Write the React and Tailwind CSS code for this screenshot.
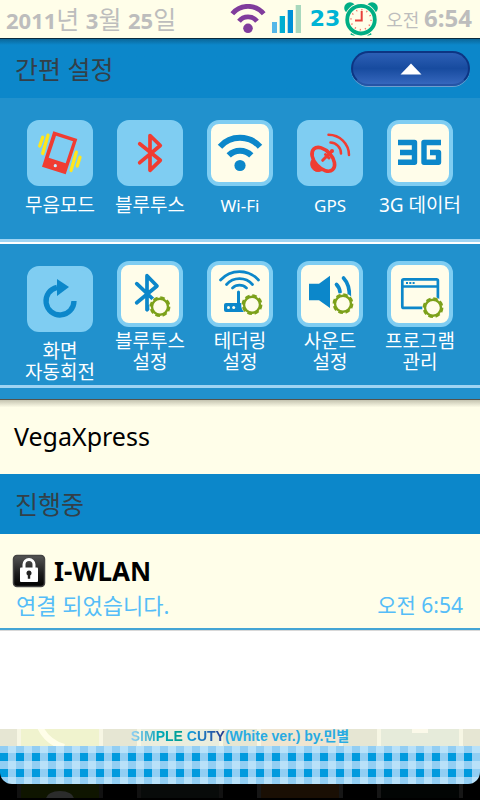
import React, { useState } from "react";
import clsx from "clsx";

const RED = "#f03c32";
const BLUE = "#0c87ca";

const Svg = ({ children, ...props }) => (
  <svg viewBox="0 0 66 66" width="66" height="66" fill="none" aria-hidden="true" {...props}>
    {children}
  </svg>
);

const Gear = ({ x, y }) => (
  <g transform={`translate(${x} ${y})`}>
    <circle r="10.8" fill="#fffdea" />
    <circle r="9.3" stroke="#7ca11b" strokeWidth="2.2" strokeDasharray="4.6 2.704" />
    <circle r="8" stroke="#7ca11b" strokeWidth="2.4" fill="#fffdea" />
  </g>
);

const VibrateIcon = () => (
  <Svg>
    <path
      d="M26.3 11.3 50.3 19 38.7 54.3 15 46.7ZM29 15.7 21.7 37.7 38.7 43.3 46 21.3Z"
      fill={RED}
      fillRule="evenodd"
    />
    <circle cx="28.3" cy="45.7" r="1.6" fill="#c9ecff" />
    <path
      d="M15.7 17.2 12.7 26M21 15.2 15.7 33.5M49.3 32.2 44 50.5M53 37.2 50.2 46"
      stroke="#ffe61c"
      strokeWidth="3.3"
      strokeLinecap="round"
    />
  </Svg>
);

const BluetoothIcon = () => (
  <Svg stroke={RED} strokeWidth="3.7" strokeLinecap="round" strokeLinejoin="round">
    <path d="M22.7 23.8 43.3 40.3 33 50.3V15.5L43.3 25.5 22.7 42.7" />
  </Svg>
);

const WifiIcon = () => (
  <Svg stroke={BLUE} strokeWidth="6">
    <path d="M13 26.7A27 27 0 0 1 53 26.7M21.7 35.4A16 16 0 0 1 44.3 35.4" />
    <circle cx="33" cy="45.5" r="5.6" fill={BLUE} stroke="none" />
  </Svg>
);

const GpsIcon = () => (
  <Svg stroke={RED} strokeLinecap="round">
    <path d="M15.5 39A6 6 0 1 0 27 49Z" fill={RED} strokeWidth="1" />
    <ellipse cx="26.3" cy="39.3" rx="14" ry="8.6" transform="rotate(48 26.3 39.3)" strokeWidth="3.6" fill="#7fcdf2" />
    <path d="M25.7 40.3 34.5 31.5M28.5 34.5 32 38" strokeWidth="3" />
    <circle cx="35" cy="31" r="2" fill={RED} stroke="none" />
    <path d="M33.5 22.5A11 11 0 0 1 44 33.5M31.5 14.8A20.5 20.5 0 0 1 52 35" strokeWidth="2.5" />
  </Svg>
);

const ThreeGIcon = () => (
  <Svg stroke={BLUE} strokeWidth="5.4" strokeLinejoin="round">
    <path d="M11 22.5H27.5V42.3H11M13 32.5H27.5M54 22.5H37V42.3H51.5V32.5H43" />
  </Svg>
);

const RotateIcon = () => (
  <Svg>
    <path d="M47 35A14 14 0 1 1 30 21.3" stroke={BLUE} strokeWidth="5.3" />
    <path d="M30 13 42 21 30 30Z" fill={BLUE} />
  </Svg>
);

const BluetoothSettingsIcon = () => (
  <Svg>
    <path
      d="M19.7 22.7 38 40 30 48.7V14.7L40 25 19.7 41.7"
      stroke={BLUE}
      strokeWidth="3.7"
      strokeLinecap="round"
      strokeLinejoin="round"
    />
    <Gear x={43} y={45.7} />
  </Svg>
);

const TetheringIcon = () => (
  <Svg>
    <path
      d="M13.5 19A25.6 25.6 0 0 1 51.5 19M19.5 23.5A17.5 17.5 0 0 1 45.5 23.5M25.5 27A10 10 0 0 1 39.5 27"
      stroke={BLUE}
      strokeWidth="2.7"
      strokeLinecap="round"
    />
    <path d="M31.5 31V43" stroke={BLUE} strokeWidth="3" strokeLinecap="round" />
    <rect x="17" y="42" width="21" height="9" rx="2" fill={BLUE} />
    <circle cx="21.5" cy="46.5" r="1.5" fill="#fffdea" />
    <circle cx="26.7" cy="46.5" r="1.5" fill="#fffdea" />
    <Gear x={45} y={43.7} />
  </Svg>
);

const SoundIcon = () => (
  <Svg>
    <path d="M12 22.7H22L33 14.7V47L22 39.3H12Z" fill={BLUE} />
    <path d="M39.5 23.5Q42.3 26 43 31M46.5 17Q53 24 52.3 36" stroke={BLUE} strokeWidth="3.7" strokeLinecap="round" />
    <Gear x={46} y={42.7} />
  </Svg>
);

const ProgramIcon = () => (
  <Svg>
    <rect x="15.3" y="18.3" width="35.6" height="28.6" rx="1.5" stroke={BLUE} strokeWidth="2.7" />
    <path d="M15 25.5H51" stroke={BLUE} strokeWidth="2.5" />
    <path d="M19 22H28" stroke={BLUE} strokeWidth="2" strokeDasharray="2 1.3" />
    <Gear x={46} y={46.7} />
  </Svg>
);

const quickToggles = [
  { lines: ["무음모드"], icon: <VibrateIcon />, on: false },
  { lines: ["블루투스"], icon: <BluetoothIcon />, on: false },
  { lines: ["Wi-Fi"], icon: <WifiIcon />, on: true, latin: true },
  { lines: ["GPS"], icon: <GpsIcon />, on: false, latin: true },
  { lines: ["3G 데이터"], icon: <ThreeGIcon />, on: true },
];

const quickSettings = [
  { lines: ["화면", "자동회전"], icon: <RotateIcon />, on: false, low: true },
  { lines: ["블루투스", "설정"], icon: <BluetoothSettingsIcon />, on: true },
  { lines: ["테더링", "설정"], icon: <TetheringIcon />, on: true },
  { lines: ["사운드", "설정"], icon: <SoundIcon />, on: true },
  { lines: ["프로그램", "관리"], icon: <ProgramIcon />, on: true },
];

const Tile = ({ lines, icon, on, latin, low, tight }) => (
  <button type="button" className={clsx("flex flex-col items-center", low && "pt-[5px]")}>
    <span
      className={clsx(
        "flex size-[66px] items-center justify-center rounded-xl border-4 border-[#7fcdf2]",
        on ? "bg-[#fffdea]" : "bg-[#7fcdf2]"
      )}
    >
      <span className="shrink-0">{icon}</span>
    </span>
    <span
      className={clsx(
        "whitespace-nowrap leading-[21px] text-white",
        latin ? "text-[17px]" : "text-[19px]",
        tight && !low ? "mt-1" : "mt-[9px]"
      )}
    >
      {lines.map((line) => (
        <span key={line} className="block">{line}</span>
      ))}
    </span>
  </button>
);

const StatusBar = () => (
  <header className="flex h-[38px] items-center justify-between bg-[#fffee9] pl-1.5 pr-2 text-[#bdbdbd]">
    <p className="whitespace-nowrap text-[25px] leading-9">
      <b className="text-[22px] font-bold">2011</b>년 <b className="text-[22px] font-bold">3</b>월{" "}
      <b className="text-[22px] font-bold">25</b>일
    </p>
    <div className="flex items-center">
      <svg width="36" height="30" viewBox="0 0 36 30" fill="none" aria-hidden="true" className="mr-1.5">
        <path d="M2.3 9.7A20.4 20.4 0 0 1 33.7 9.7M9 17.2A11.5 11.5 0 0 1 27 17.2" stroke="#803c9c" strokeWidth="4.8" />
        <circle cx="18" cy="24.3" r="4.8" fill="#803c9c" />
      </svg>
      <svg width="30" height="28" viewBox="0 0 30 28" aria-hidden="true" className="mr-2">
        <path d="M0 17H5V28H0Z" fill="#55b7e8" />
        <path d="M7.7 11H13V28H7.7Z" fill="#00aed0" />
        <path d="M15.7 5H21V28H15.7Z" fill="#0090d8" />
        <path d="M23.7 0H29V28H23.7Z" fill="#a8d8bd" />
      </svg>
      <b className="mr-1 font-['DejaVu_Sans',sans-serif] text-[22px] leading-9 text-[#00b4d5]">23</b>
      <svg width="34" height="34" viewBox="0 0 34 34" fill="none" aria-hidden="true" className="mr-2">
        <path d="M9.5 29 8.5 33.3M24.5 29 25.5 33.3" stroke="#00ae84" strokeWidth="4" />
        <circle cx="6" cy="6" r="5.8" fill="#00ae84" />
        <circle cx="28" cy="6" r="5.8" fill="#00ae84" />
        <circle cx="17" cy="17.7" r="16.6" fill="#fffee9" />
        <circle cx="17" cy="17.7" r="13.8" stroke="#00ae84" strokeWidth="3.8" />
        <circle cx="17" cy="17.7" r="10" stroke="#f0766a" strokeWidth="1.6" strokeDasharray="1.2 4.036" />
        <path d="M17.7 9V18.5H11" stroke="#e8403c" strokeWidth="2" />
      </svg>
      <p className="whitespace-nowrap text-lg leading-9">
        오전 <b className="text-2xl leading-9 font-bold">6:54</b>
      </p>
    </div>
  </header>
);

const SectionTitle = ({ children }) => (
  <h2 className="text-[25px] leading-[60px] text-[#333f48]">{children}</h2>
);

const LockIcon = () => (
  <svg width="34" height="34" viewBox="0 0 34 34" fill="none" aria-hidden="true">
    <defs>
      <linearGradient id="lockShade" x2="0" y2="1">
        <stop stopColor="#555" />
        <stop offset="0.6" stopColor="#1b1b1b" />
        <stop offset="1" stopColor="#000" />
      </linearGradient>
    </defs>
    <rect x="1.5" y="1.5" width="31" height="31" rx="3.5" fill="url(#lockShade)" stroke="#444" strokeWidth="1.5" />
    <path d="M12 15V10.5A5 5 0 0 1 22 10.5V15" stroke="#fff" strokeWidth="3" />
    <rect x="8" y="13.5" width="18" height="14.5" rx="1" fill="#fff" />
    <path d="M17 16.5A2.6 2.6 0 0 1 18.2 21.4V24.7H15.8V21.4A2.6 2.6 0 0 1 17 16.5Z" fill="#222" />
  </svg>
);

const Handle = () => (
  <footer className="bg-black">
    {/* launcher icons showing through the drawer */}
    <div className="overflow-hidden rounded-b-xl">
      <div className="grid h-[17px] grid-cols-1 bg-[#e6e6d3]">
        <div className="col-start-1 row-start-1 grid grid-cols-4 justify-items-center">
          <span className="h-full w-[86px] border-x-4 border-[#f7f6e4] bg-[#f0f3ce]">
            <svg width="60" height="17" viewBox="0 0 60 17" fill="none" aria-hidden="true">
              <path d="M19 -2Q26 13 43 18" stroke="#fffee9" strokeWidth="6" />
            </svg>
          </span>
          <span className="h-full w-[86px] border-x-4 border-[#f7f6e4] bg-[#eaeddd]" />
          <span className="h-full w-[86px] border-x-4 border-[#f7f6e4] bg-[#efe5d0]" />
          <span className="flex h-full w-[86px] justify-center border-x-4 border-[#f7f6e4] bg-[#e6ebda]">
            <span className="h-1 w-4 bg-[#fbf9e9]" />
          </span>
        </div>
        <p className="col-start-1 row-start-1 whitespace-nowrap text-center font-['Liberation_Sans','Noto_Sans_CJK_KR',sans-serif] text-sm font-bold leading-[14px] text-[#29abe2]">
          <span className="bg-linear-to-r from-[#8fd0f5] via-[#00aabf] to-[#009c8c] bg-clip-text text-transparent">SIMPLE</span>{" "}
          <span className="bg-linear-to-r from-[#00a5e0] to-[#24388f] bg-clip-text text-transparent">CUTY</span>
          (White ver.) by.민별
        </p>
      </div>
      <div className="h-[38px] bg-[conic-gradient(#b8e1f9_25%,#92cef3_25%_50%,#009ade_50%_75%,#92cef3_75%)] bg-[length:16px_16px] bg-[position:0_-1px]" />
    </div>
    <div className="grid h-4 grid-cols-4 justify-items-center pb-0.5">
      <span className="flex h-full w-[86px] justify-center border-x-4 border-[#111] bg-[#0f1500]">
        <svg width="30" height="14" viewBox="0 0 30 14" aria-hidden="true">
          <ellipse cx="15" cy="15" rx="14" ry="8" fill="#2b2c2b" />
        </svg>
      </span>
      <span className="h-full w-[86px] border-x-4 border-[#111] bg-[#080b0a]" />
      <span className="h-full w-[86px] border-x-4 border-[#161616] bg-[#1a0f04]" />
      <span className="h-full w-[86px] border-x-4 border-[#161616] bg-[#020504]" />
    </div>
  </footer>
);

export default function App() {
  const [open, setOpen] = useState(true);

  return (
    <div className="flex min-h-screen flex-col bg-white font-['Noto_Sans','Noto_Sans_CJK_KR',sans-serif]">
      <StatusBar />

      <div className="flex h-[60px] items-center justify-between border-t border-[#0a2a3c] bg-[#0c87ca] bg-linear-to-b from-[#0b6799] to-[#0c87ca] to-10% pl-[15px] pr-2.5">
        <SectionTitle>간편 설정</SectionTitle>
        <button
          type="button"
          aria-label="간편 설정"
          aria-expanded={open}
          onClick={() => setOpen(!open)}
          className="flex h-[35px] w-[119px] items-center justify-center rounded-full border-2 border-[#0d3583] border-b-[#2554a6] bg-linear-to-b from-[#2c5fb5] via-[#174b9f] to-[#3567bd] shadow-[0_1px_0_#6f9fce]"
        >
          <svg width="22" height="12" viewBox="0 0 22 12" aria-hidden="true" className={clsx(!open && "rotate-180")}>
            <path d="M11 0.5 21.5 11.5H0.5Z" fill="#fff" />
          </svg>
        </button>
      </div>

      {open && (
        <section className="bg-[#2191cd]">
          <div className="grid h-[141px] grid-cols-5 items-start px-[15px] pt-[22px]">
            {quickToggles.map((item) => (
              <Tile key={item.lines[0]} {...item} />
            ))}
          </div>
          <div className="h-[5px] border-b-2 border-white bg-[#9fd4f3]" />
          <div className="grid h-[141px] grid-cols-5 items-start px-[15px] pt-[17px]">
            {quickSettings.map((item) => (
              <Tile key={item.lines[0]} tight {...item} />
            ))}
          </div>
          <div className="mb-[11px] h-[3px] bg-[#9fd4f3]" />
        </section>
      )}

      <div className="h-[75px] border-t border-[#55524a] bg-linear-to-b from-[#c4c3b0] to-[#fffee9] to-10% pl-3.5 text-[25px] leading-[72px] text-black">
        VegaXpress
      </div>

      <div className="bg-[#0c87ca] pl-[15px]">
        <SectionTitle>진행중</SectionTitle>
      </div>

      <article className="border-b border-[#d8d8d8] bg-[#fffee9]">
        <div className="h-[96px] border-b-2 border-[#44a5d5] pl-3 pr-[17px] pt-5">
          <div className="flex items-center gap-2">
            <LockIcon />
            <h3 className="text-[26px] font-bold leading-[34px] text-black">I-WLAN</h3>
          </div>
          <div className="flex justify-between pl-1 leading-[34px] text-[#55bdf8]">
            <p className="text-[22px] leading-[34px]">연결 되었습니다.</p>
            <time className="text-[21px] leading-[34px]">오전 6:54</time>
          </div>
        </div>
      </article>

      <div className="flex-1" />
      <Handle />
    </div>
  );
}
